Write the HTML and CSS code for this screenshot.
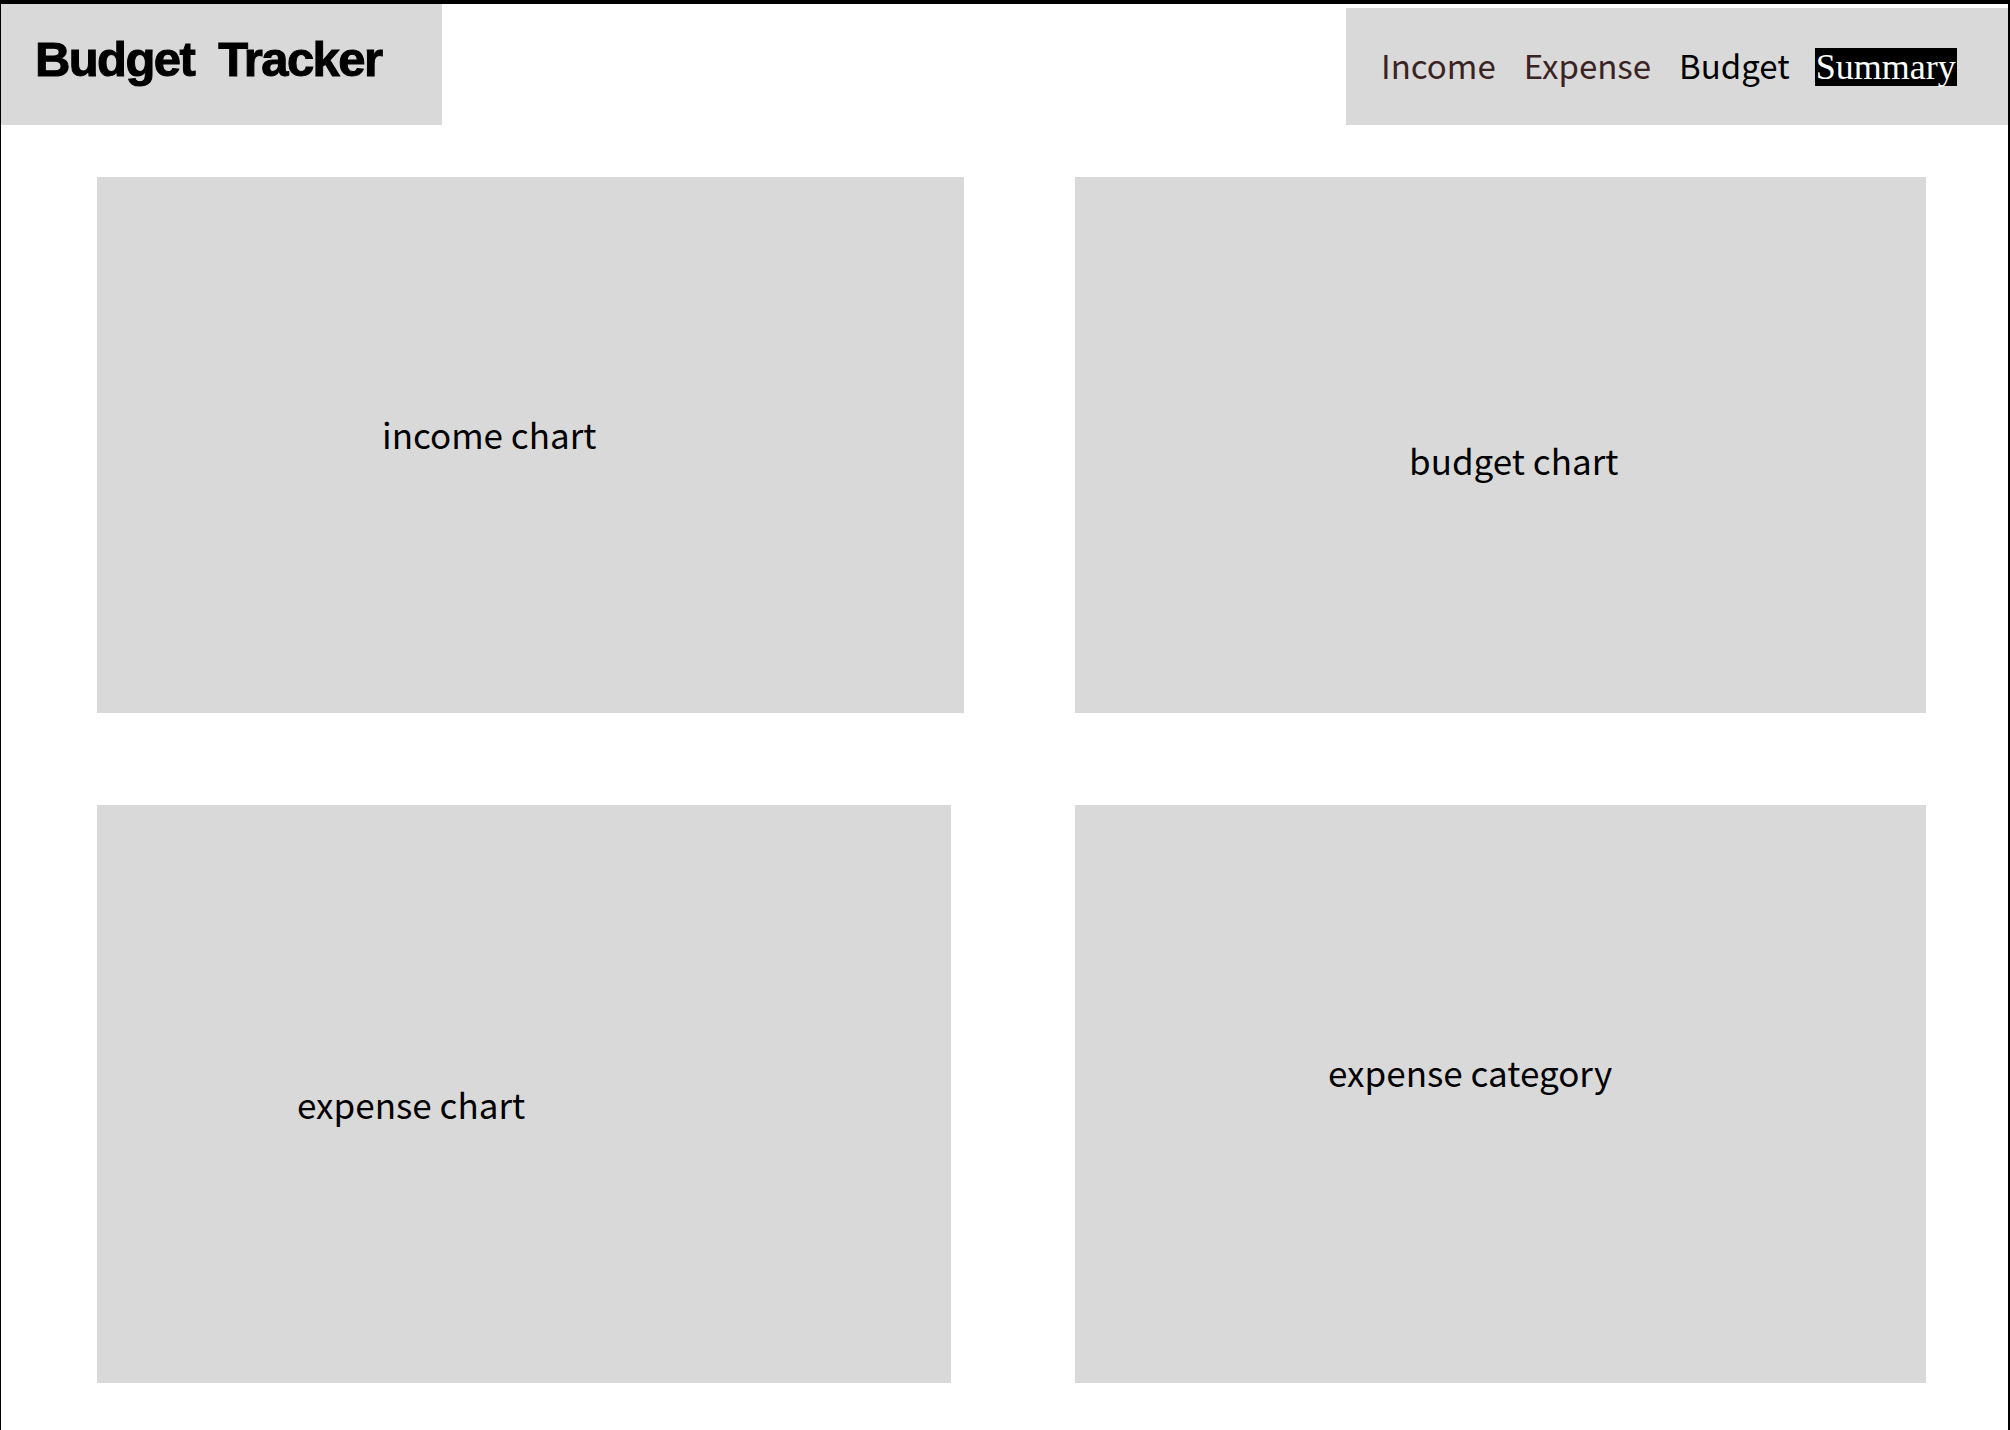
FILE: index.html
```html
<!DOCTYPE html>
<html lang="en">
<head>
<meta charset="utf-8">
<title>Budget Tracker</title>
<link rel="stylesheet" href="styles.css">
</head>
<body>
<div class="page">
  <header class="header">
    <div class="logo"><h1 class="title">Budget&nbsp; Tracker</h1></div>
    <nav class="nav">
      <a class="nav-link brown" href="#">Income</a>
      <a class="nav-link brown" href="#">Expense</a>
      <a class="nav-link" href="#">Budget</a>
      <a class="nav-link active" href="#">Summary</a>
    </nav>
  </header>
  <main class="grid">
    <section class="card card-income"><span class="label">income chart</span></section>
    <section class="card card-budget"><span class="label">budget chart</span></section>
    <section class="card card-expense"><span class="label">expense chart</span></section>
    <section class="card card-category"><span class="label">expense category</span></section>
  </main>
</div>
</body>
</html>
```
FILE: styles.css
```css
html, body {
  margin: 0;
  padding: 0;
  background: #ffffff;
}
.page {
  box-sizing: border-box;
  width: 2010px;
  height: 1430px;
  border-top: 4px solid #000;
  border-left: 1px solid #000;
  border-right: 2px solid #000;
  font-family: "Noto Sans CJK KR", "Noto Sans", sans-serif;
}
.header {
  display: flex;
  justify-content: space-between;
  align-items: flex-start;
}
.logo {
  box-sizing: border-box;
  width: 441px;
  height: 121px;
  background: #d9d9d9;
  padding: 25px 0 0 34px;
}
.title {
  margin: 0;
  font-family: "Liberation Sans", sans-serif;
  font-weight: 700;
  font-size: 49px;
  line-height: 60px;
  color: #000;
  letter-spacing: -1.6px;
  -webkit-text-stroke: 1px #000;
  white-space: nowrap;
}
.nav {
  box-sizing: border-box;
  width: 662px;
  height: 117px;
  margin-top: 4px;
  background: #d9d9d9;
  display: flex;
  align-items: baseline;
  gap: 28px;
  padding: 33px 0 0 35px;
}
.nav-link {
  font-size: 33px;
  line-height: 48px;
  color: #000;
  text-decoration: none;
}
.nav-link.brown {
  color: #3a2323;
}
.nav-link.active {
  margin-left: -3px;
  font-family: "Liberation Serif", serif;
  font-size: 36px;
  line-height: 38px;
  background: #000;
  color: #fff;
  padding: 0 1px;
}
.grid {
  display: grid;
  grid-template-columns: 978px 851px;
  grid-template-rows: 536px 578px;
  row-gap: 92px;
  padding: 52px 0 0 96px;
}
.card {
  box-sizing: border-box;
  background: #d9d9d9;
  height: 100%;
}
.label {
  display: block;
  font-size: 35px;
  line-height: 1;
  color: #000;
  white-space: nowrap;
}
.card-income {
  width: 867px;
  padding: 239px 0 0 285px;
}
.card-budget {
  width: 851px;
  padding: 265px 0 0 334px;
}
.card-expense {
  width: 854px;
  padding: 281px 0 0 200px;
}
.card-category {
  width: 851px;
  padding: 249px 0 0 253px;
}
```
